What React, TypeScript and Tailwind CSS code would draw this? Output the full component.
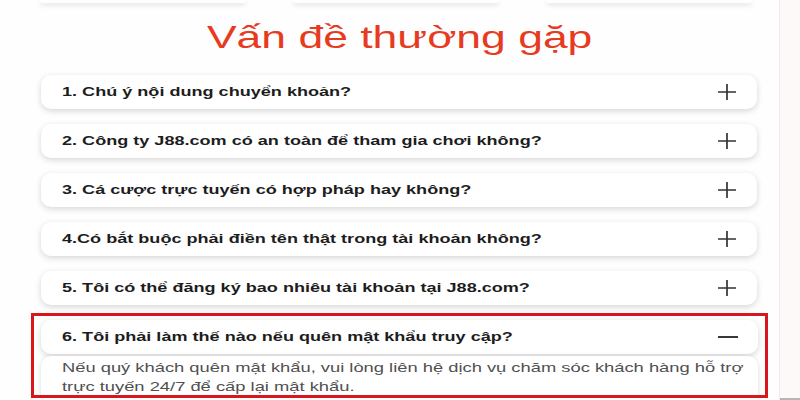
import React from "react";

const questions = [
  "1. Chú ý nội dung chuyển khoản?",
  "2. Công ty J88.com có an toàn để tham gia chơi không?",
  "3. Cá cược trực tuyến có hợp pháp hay không?",
  "4.Có bắt buộc phải điền tên thật trong tài khoản không?",
  "5. Tôi có thể đăng ký bao nhiêu tài khoản tại J88.com?",
];

function PlusIcon() {
  return (
    <svg width="20" height="18" viewBox="0 0 20 18" fill="none">
      <path d="M1 9H19M10 1V17" stroke="#333" strokeWidth="1.7" />
    </svg>
  );
}

function MinusIcon() {
  return (
    <svg width="20" height="18" viewBox="0 0 20 18" fill="none">
      <path d="M0 9H20" stroke="#222" strokeWidth="1.8" />
    </svg>
  );
}

function Row({ text, open }: { text: string; open?: boolean }) {
  return (
    <div className="flex h-[34px] items-center justify-between rounded-[10px] bg-white pl-[21px] pr-[20px] shadow-[0_2px_6px_rgba(0,0,0,0.16)]">
      <span className="inline-block origin-left scale-x-[1.39] whitespace-nowrap text-[13px] font-bold text-[#1d1d1d] [font-family:'Liberation_Sans',Arial,sans-serif]">
        {text}
      </span>
      {open ? <MinusIcon /> : <PlusIcon />}
    </div>
  );
}

export default function App() {
  return (
    <div className="flex h-[400px] w-[800px] overflow-hidden bg-white">
      <div className="flex w-[779px] flex-col bg-[#fefefe]">
        <div className="ml-[40px] flex gap-[47px]">
          <div className="h-[3px] w-[206px] rounded-b-[10px] bg-white shadow-[0_2px_5px_rgba(0,0,0,0.14)]" />
          <div className="h-[3px] w-[206px] rounded-b-[10px] bg-white shadow-[0_2px_5px_rgba(0,0,0,0.14)]" />
          <div className="h-[3px] w-[206px] rounded-b-[10px] bg-white shadow-[0_2px_5px_rgba(0,0,0,0.14)]" />
        </div>
        <div className="mt-[13px] flex w-[800px] justify-center">
          <h2 className="inline-block origin-center scale-x-[1.39] text-[32px] font-normal leading-[42px] text-[#e63b1f] [font-family:'Liberation_Sans',Arial,sans-serif]">
            Vấn đề thường gặp
          </h2>
        </div>
        <div className="ml-[41px] mt-[17px] flex w-[716px] flex-col gap-[15px]">
          {questions.map((q) => (
            <Row key={q} text={q} />
          ))}
        </div>
        <div className="ml-[31px] mt-[8px] h-[85px] w-[737px] overflow-hidden border-[3px] border-[#d8161c] px-[7px] pt-[4px]">
          <Row text="6. Tôi phải làm thế nào nếu quên mật khẩu truy cập?" open />
          <div className="mt-[2px] h-[60px] rounded-t-[10px] bg-white pl-[21px] pt-[2px] shadow-[0_1px_5px_rgba(0,0,0,0.14)]">
            <p className="inline-block origin-left scale-x-[1.41] whitespace-nowrap text-[13px] leading-[19px] text-[#505050] [font-family:'Liberation_Sans',Arial,sans-serif]">
              Nếu quý khách quên mật khẩu, vui lòng liên hệ dịch vụ chăm sóc khách hàng hỗ trợ
              <br />
              trực tuyến 24/7 để cấp lại mật khẩu.
            </p>
          </div>
        </div>
      </div>
      <div className="flex w-[21px] flex-col justify-end border-l border-[#efe9e9] bg-[#fdf9f9]">
        <div className="h-[2px] bg-[#b5b5b5]" />
      </div>
    </div>
  );
}
